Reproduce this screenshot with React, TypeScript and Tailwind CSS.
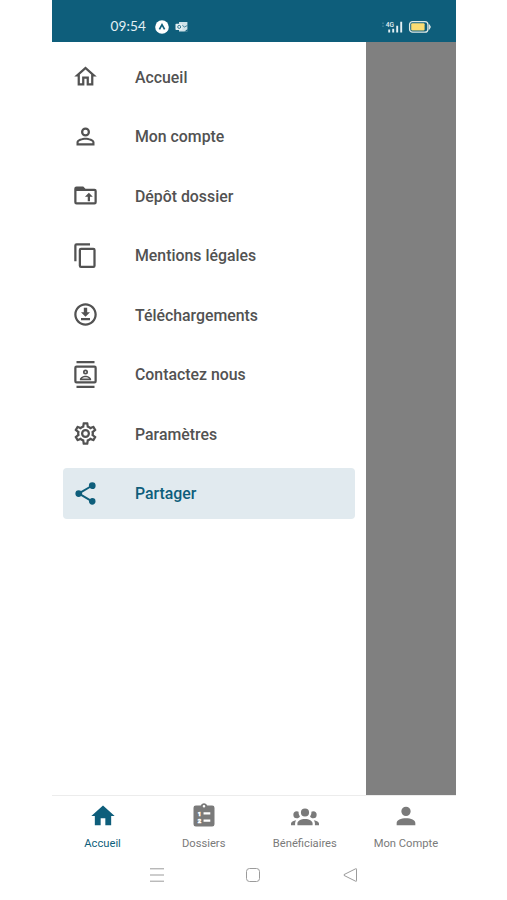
import React, { useState } from 'react';
import clsx from 'clsx';

interface IconProps {
  className?: string;
}

const paths = {
  homeOutline:
    'M12 5.69L17 10.19V18H15V12H9V18H7V10.19L12 5.69M12 3L2 12H5V20H11V14H13V20H19V12H22',
  accountOutline:
    'M12,4A4,4 0 0,1 16,8A4,4 0 0,1 12,12A4,4 0 0,1 8,8A4,4 0 0,1 12,4M12,6A2,2 0 0,0 10,8A2,2 0 0,0 12,10A2,2 0 0,0 14,8A2,2 0 0,0 12,6M12,13C14.67,13 20,14.33 20,17V20H4V17C4,14.33 9.33,13 12,13M12,14.9C9.03,14.9 5.9,16.36 5.9,17V18.1H18.1V17C18.1,16.36 14.97,14.9 12,14.9Z',
  folderUpload:
    'M20,6A2,2 0 0,1 22,8V18A2,2 0 0,1 20,20H4A2,2 0 0,1 2,18V6A2,2 0 0,1 4,4H10L12,6H20M4,8V18H20V8H4M14,17V13H11.5L15,9.5L18.5,13H16V17H14Z',
  copy:
    'M19,21H8V7H19M19,5H8A2,2 0 0,0 6,7V21A2,2 0 0,0 8,23H19A2,2 0 0,0 21,21V7A2,2 0 0,0 19,5M16,1H4A2,2 0 0,0 2,3V17H4V3H16V1Z',
  downloadCircle:
    'M8 17V15H16V17H8M16 10L12 14L8 10H10.5V6H13.5V10H16M12 2C17.5 2 22 6.5 22 12C22 17.5 17.5 22 12 22C6.5 22 2 17.5 2 12C2 6.5 6.5 2 12 2M12 4C7.58 4 4 7.58 4 12C4 16.42 7.58 20 12 20C16.42 20 20 16.42 20 12C20 7.58 16.42 4 12 4Z',
  contacts:
    'M20,4H4A2,2 0 0,0 2,6V18A2,2 0 0,0 4,20H20A2,2 0 0,0 22,18V6A2,2 0 0,0 20,4M20,18H4V6H20V18M4,0H20V2H4V0M4,22H20V24H4V22M12,12A2.25,2.25 0 0,0 14.25,9.75A2.25,2.25 0 0,0 12,7.5A2.25,2.25 0 0,0 9.75,9.75A2.25,2.25 0 0,0 12,12M12,9A0.75,0.75 0 0,1 12.75,9.75A0.75,0.75 0 0,1 12,10.5A0.75,0.75 0 0,1 11.25,9.75A0.75,0.75 0 0,1 12,9M17,16.25C17,14.25 13.69,13 12,13C10.31,13 7,14.25 7,16.25V17H17V16.25M8.81,15.5C9.42,14.98 10.84,14.5 12,14.5C13.17,14.5 14.59,14.98 15.2,15.5H8.81Z',
  cog:
    'M12,8A4,4 0 0,1 16,12A4,4 0 0,1 12,16A4,4 0 0,1 8,12A4,4 0 0,1 12,8M12,10A2,2 0 0,0 10,12A2,2 0 0,0 12,14A2,2 0 0,0 14,12A2,2 0 0,0 12,10M10,22C9.75,22 9.54,21.82 9.5,21.58L9.13,18.93C8.5,18.68 7.96,18.34 7.44,17.94L4.95,18.95C4.73,19.03 4.46,18.95 4.34,18.73L2.34,15.27C2.21,15.05 2.27,14.78 2.46,14.63L4.57,12.97L4.5,12L4.57,11L2.46,9.37C2.27,9.22 2.21,8.95 2.34,8.73L4.34,5.27C4.46,5.05 4.73,4.96 4.95,5.05L7.44,6.05C7.96,5.66 8.5,5.32 9.13,5.07L9.5,2.42C9.54,2.18 9.75,2 10,2H14C14.25,2 14.46,2.18 14.5,2.42L14.87,5.07C15.5,5.32 16.04,5.66 16.56,6.05L19.05,5.05C19.27,4.96 19.54,5.05 19.66,5.27L21.66,8.73C21.79,8.95 21.73,9.22 21.54,9.37L19.43,11L19.5,12L19.43,13L21.54,14.63C21.73,14.78 21.79,15.05 21.66,15.27L19.66,18.73C19.54,18.95 19.27,19.04 19.05,18.95L16.56,17.95C16.04,18.34 15.5,18.68 14.87,18.93L14.5,21.58C14.46,21.82 14.25,22 14,22H10M11.25,4L10.88,6.61C9.68,6.86 8.62,7.5 7.85,8.39L5.44,7.35L4.69,8.65L6.8,10.2C6.4,11.37 6.4,12.64 6.8,13.8L4.68,15.36L5.43,16.66L7.86,15.62C8.63,16.5 9.68,17.14 10.87,17.38L11.24,20H12.76L13.13,17.39C14.32,17.14 15.37,16.5 16.14,15.62L18.57,16.66L19.32,15.36L17.2,13.81C17.6,12.64 17.6,11.37 17.2,10.2L19.31,8.65L18.56,7.35L16.15,8.39C15.38,7.5 14.32,6.86 13.12,6.62L12.75,4H11.25Z',
  share:
    'M18,16.08C17.24,16.08 16.56,16.38 16.04,16.85L8.91,12.7C8.96,12.47 9,12.24 9,12C9,11.76 8.96,11.53 8.91,11.3L15.96,7.19C16.5,7.69 17.21,8 18,8A3,3 0 0,0 21,5A3,3 0 0,0 18,2A3,3 0 0,0 15,5C15,5.24 15.04,5.47 15.09,5.7L8.04,9.81C7.5,9.31 6.79,9 6,9A3,3 0 0,0 3,12A3,3 0 0,0 6,15C6.79,15 7.5,14.69 8.04,14.19L15.16,18.34C15.11,18.55 15.08,18.77 15.08,19C15.08,20.61 16.39,21.91 18,21.91C19.61,21.91 20.92,20.61 20.92,19A2.92,2.92 0 0,0 18,16.08Z',
  home: 'M10,20V14H14V20H19V12H22L12,3L2,12H5V20H10Z',
  group:
    'M12,5.5A3.5,3.5 0 0,1 15.5,9A3.5,3.5 0 0,1 12,12.5A3.5,3.5 0 0,1 8.5,9A3.5,3.5 0 0,1 12,5.5M5,8C5.56,8 6.08,8.15 6.53,8.42C6.38,9.85 6.8,11.27 7.66,12.38C7.16,13.34 6.16,14 5,14A3,3 0 0,1 2,11A3,3 0 0,1 5,8M19,8A3,3 0 0,1 22,11A3,3 0 0,1 19,14C17.84,14 16.84,13.34 16.34,12.38C17.2,11.27 17.62,9.85 17.47,8.42C17.92,8.15 18.44,8 19,8M5.5,18.25C5.5,16.18 8.41,14.5 12,14.5C15.59,14.5 18.5,16.18 18.5,18.25V20H5.5V18.25M0,20V18.5C0,17.11 1.89,15.94 4.45,15.6C3.86,16.28 3.5,17.22 3.5,18.25V20H0M24,20H20.5V18.25C20.5,17.22 20.14,16.28 19.55,15.6C22.11,15.94 24,17.11 24,18.5V20Z',
  account:
    'M12,4A4,4 0 0,1 16,8A4,4 0 0,1 12,12A4,4 0 0,1 8,8A4,4 0 0,1 12,4M12,14C16.42,14 20,15.79 20,18V20H4V18C4,15.79 7.58,14 12,14Z',
};

type IconName = keyof typeof paths;

function Icon({ name, className }: IconProps & { name: IconName }) {
  return (
    <svg viewBox="0 0 24 24" fill="currentColor" className={className}>
      <path d={paths[name]} />
    </svg>
  );
}

function ClipboardIcon({ className }: IconProps) {
  return (
    <svg viewBox="0 0 24 24" className={className}>
      <path
        fill="currentColor"
        fillRule="evenodd"
        d="M19 3H14.8C14.4 1.84 13.3 1 12 1S9.6 1.84 9.2 3H5A2 2 0 0 0 3 5V19A2 2 0 0 0 5 21H19A2 2 0 0 0 21 19V5A2 2 0 0 0 19 3M12 2.6A1.1 1.1 0 1 1 12 4.8A1.1 1.1 0 0 1 12 2.6"
      />
      <path d="M11.6 9.8H17.4M11.6 15.9H17.4" stroke="white" strokeWidth="1.9" />
      <g fill="white" stroke="white" strokeWidth="0.5" fontSize="5" fontWeight="700">
        <text x="6.6" y="11.6">1</text>
        <text x="6.6" y="17.8">2</text>
      </g>
    </svg>
  );
}

const menuItems: { label: string; icon: IconName }[] = [
  { label: 'Accueil', icon: 'homeOutline' },
  { label: 'Mon compte', icon: 'accountOutline' },
  { label: 'Dépôt dossier', icon: 'folderUpload' },
  { label: 'Mentions légales', icon: 'copy' },
  { label: 'Téléchargements', icon: 'downloadCircle' },
  { label: 'Contactez nous', icon: 'contacts' },
  { label: 'Paramètres', icon: 'cog' },
  { label: 'Partager', icon: 'share' },
];

const tabs: { label: string; icon: IconName | 'clipboard' }[] = [
  { label: 'Accueil', icon: 'home' },
  { label: 'Dossiers', icon: 'clipboard' },
  { label: 'Bénéficiaires', icon: 'group' },
  { label: 'Mon Compte', icon: 'account' },
];

function StatusBar() {
  return (
    <header className="flex h-[42px] shrink-0 items-center bg-[#0e5e7b] pt-3 pr-6 pl-[59px] text-[#e4f0f4]">
      <span className="w-[44.5px] font-['Lato'] text-[13.6px] leading-none tracking-[0.1px]">09:54</span>
      <svg viewBox="0 0 14 14" className="h-[14px] w-[14px]">
        <circle cx="7" cy="7" r="6.8" fill="white" />
        <path d="M4.4 9.3L7 4.7L9.6 9.3" fill="none" stroke="#0e5e7b" strokeWidth="1.7" />
      </svg>
      <svg viewBox="0 0 14 12" className="ml-1.5 h-3 w-[14px]">
        <path d="M4 1H12.4V10.5H4Z" fill="#cfe2e9" />
        <path d="M7 4L9.4 6L12.4 4.5" fill="none" stroke="#0e5e7b" strokeWidth="0.7" />
        <rect x="0.5" y="2.7" width="6.8" height="6.3" rx="0.8" fill="#e4f0f4" />
        <circle cx="4.2" cy="5.9" r="1.5" fill="none" stroke="#0e5e7b" strokeWidth="0.8" />
        <path d="M9.4 10.5L12.6 8V10.5Z" fill="#0e5e7b" />
      </svg>
      <svg viewBox="0 0 22 14" className="ml-auto h-[14px] w-[22px]">
        <path d="M1 2.5V4M1 5.5V7" stroke="#6f9fb1" strokeWidth="0.8" />
        <text x="3.8" y="6.5" fontSize="6.6" fontWeight="500" fill="currentColor">4G</text>
        <path
          d="M7.2 9.5V12.4M11.2 8.7V12.4M15.2 5.7V12.4M19.2 1.8V12.4"
          stroke="currentColor"
          strokeWidth="1.9"
        />
      </svg>
      <svg viewBox="0 0 24 14" className="ml-1 h-[14px] w-6">
        <rect x="1.6" y="1.6" width="18.3" height="10.6" rx="3" fill="none" stroke="#dfe9e6" strokeWidth="1.3" />
        <rect x="3.2" y="3.2" width="13.4" height="7.4" rx="1" fill="#fadc73" />
        <path d="M21.2 4.6Q23.6 7 21.2 9.4Z" fill="#dfe9e6" stroke="#dfe9e6" strokeWidth="0.8" />
      </svg>
    </header>
  );
}

export default function App() {
  const [activeItem, setActiveItem] = useState('Partager');
  const [activeTab, setActiveTab] = useState('Accueil');

  return (
    <div className="h-[900px] w-[507px] overflow-hidden bg-white font-['Roboto',sans-serif]">
      <div className="ml-[51.5px] flex h-full w-[404.5px] flex-col">
        <StatusBar />

        <div className="flex h-[753px] shrink-0">
          <nav className="flex flex-1 flex-col gap-[9px] bg-white px-[11.5px] pt-[9.5px]">
            {menuItems.map(item => (
              <button
                key={item.label}
                onClick={() => setActiveItem(item.label)}
                className={clsx(
                  'flex h-[50.5px] items-center rounded-[4px] pl-[9px] text-left',
                  activeItem === item.label ? 'bg-[#e1eaef] text-[#0e5e7b]' : 'text-[#525252]'
                )}
              >
                <Icon name={item.icon} className="h-[27px] w-[27px]" />
                <span className="ml-9 pt-[2px] text-[15.85px] leading-6 font-medium">{item.label}</span>
              </button>
            ))}
          </nav>
          <div className="w-[90px] bg-[#808080]" />
        </div>

        <div className="grid h-[62px] shrink-0 grid-cols-4 border-t border-[#ececec]">
          {tabs.map(tab => (
            <button
              key={tab.label}
              onClick={() => setActiveTab(tab.label)}
              className={clsx(
                'flex flex-col items-center pt-[6px] pl-px',
                activeTab === tab.label ? 'text-[#0e5e7b]' : 'text-[#7a7a7a]'
              )}
            >
              {tab.icon === 'clipboard' ? (
                <ClipboardIcon className="h-7 w-7" />
              ) : (
                <Icon name={tab.icon} className="h-7 w-7" />
              )}
              <span className="mt-[6px] text-[11.2px] leading-4 whitespace-nowrap">{tab.label}</span>
            </button>
          ))}
        </div>

        {/* Android navigation keys */}
        <div className="flex h-9 items-center justify-between pr-[98px] pl-[97px] text-[#9b9b9b]">
          <svg viewBox="0 0 16 16" fill="none" stroke="currentColor" className="h-4 w-4">
            <path d="M1 1.8H15M1 8H15M1 14.2H15" />
          </svg>
          <svg viewBox="0 0 16 16" fill="none" stroke="currentColor" className="h-4 w-4">
            <rect x="1.5" y="1.5" width="13" height="13" rx="3" />
          </svg>
          <svg viewBox="0 0 16 16" fill="none" stroke="currentColor" className="h-4 w-4">
            <path d="M14.5 2.2V13.8Q14.5 14.7 13.6 14.2L2 8.4Q1.3 8 2 7.6L13.6 1.8Q14.5 1.3 14.5 2.2Z" />
          </svg>
        </div>
      </div>
    </div>
  );
}
